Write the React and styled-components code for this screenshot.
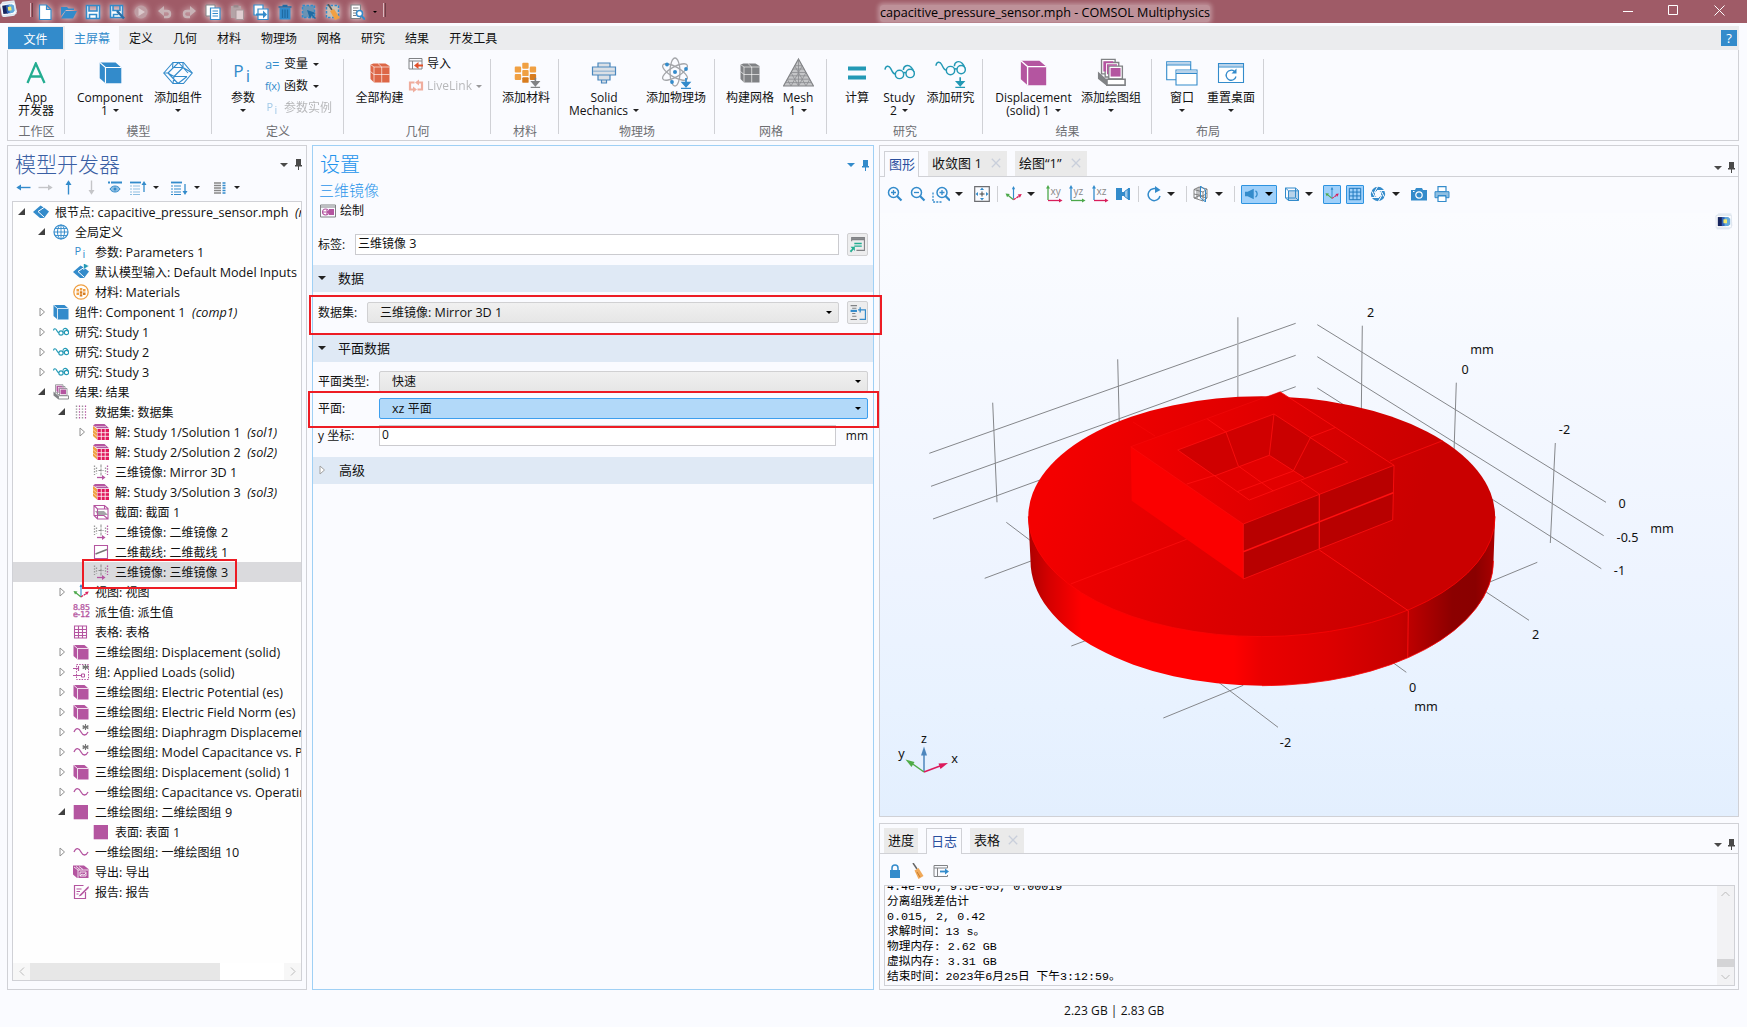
import React from "react";
import styled, { createGlobalStyle } from "styled-components";

const BLUE = "#338bcb";
const PURPLE = "#b455a0";
const GREY = "#808285";
const TEAL = "#2399b5";
const LINE = "#d0d1d6";
const BG = "#fafbff";

const Global = createGlobalStyle`
  * { box-sizing: border-box; }
  html, body { margin: 0; padding: 0; }
  body {
    width: 1747px; height: 1027px; overflow: hidden; background: ${BG}; color: #111;
    font: 12px/14px "Open Sans", "Noto Sans CJK SC", sans-serif;
  }
  svg { display: block; flex: none; }
`;

/* Latin runs are set a little larger than the Chinese glyphs beside them. */
const Latin = styled.span`font-size: 12.6px;`;
const Mixed = ({ children }) =>
  children.split(/([\x20-\x7e]+)/).map((t, i) => (i % 2 ? <Latin key={i}>{t}</Latin> : t));

/* ---------- icons ---------- */

const Svg = ({ s = 16, w, h, vb = 16, children }) => (
  <svg width={w || s} height={h || s} viewBox={`0 0 ${vb} ${vb}`} fill="none" strokeLinejoin="miter">
    {children}
  </svg>
);

const Cube = ({ c, s = 16 }) => (
  <Svg s={s}>
    <path d="M.5 1h11L15.500 4.500v11H4.500L.5 12z" fill={c} />
    <path d="M.5 1 4.500 4.500h11M4.500 4.500v11" stroke="#fff" strokeWidth=".8" />
  </Svg>
);

const GridCube = ({ c, s = 20 }) => (
  <Svg s={s} vb={20}>
    <path d="M.5 1.500 3.500.5h12l4 2.500v16.500H4L.5 16z" fill={c} />
    <path d="M.5 1.500 4 4h15.500M4 4v15.500M11.700 4v15.500M4 11.500h15.500M.5 8.500l3.500 3M8 .5 11.700 4" stroke="#fff" strokeWidth=".8" opacity=".8" />
  </Svg>
);

const Glasses = ({ s = 16, up = 0, children }) => (
  <Svg s={s} vb={32}>
    <g stroke={TEAL} strokeWidth={s > 20 ? 1.5 : 2.3} transform={`translate(0 ${-up})`}>
      <path d="M1 13c.5-4 4-5 6-1s2.500 5.500 5 5.500" />
      <circle cx="16" cy="18" r="4.300" />
      <circle cx="27" cy="17" r="4.300" />
      <path d="M20 17c.8-1.200 1.800-1.200 2.800-.5M20 13.500c0-5 5-6 8-3 1.500 1.500 2.500 3 2.800 5" />
    </g>
    {children}
  </Svg>
);

const DownArrow = ({ c }) => <path d="M26 21v6M22.500 25.500h7L26 29.500zM21 31.500h10" stroke={c} strokeWidth="1.700" fill={c} />;

const Wave = ({ star }) => (
  <Svg>
    <path d="M1 8c2-5 5-4 7 0s5 4 7 0" stroke={PURPLE} strokeWidth="1.300" />
    {star && <path d="M12.500 0v6M9.700 1.500l5.600 3.200M15.300 1.500 9.700 4.700M9.500 3h6" stroke="#777" strokeWidth="1.100" />}
  </Svg>
);

const Mirror = () => (
  <Svg>
    <path d="M1.500 1.500v9.500M3.500 3.500v6M12.500 3.500v6" stroke="#999" strokeWidth="1.300" strokeDasharray="1.500 1.300" />
    <path d="M14.500 1.500v9.500" stroke={PURPLE} strokeDasharray="1.500 1.300" strokeWidth="1.300" />
    <path d="M8 .5v11M5.500 6.500h5" stroke="#888" strokeWidth="1" strokeDasharray="3 1" />
    <path d="M4 13.500h6" stroke={PURPLE} strokeWidth="1.300" />
    <path d="M9 11l3.500 2.500L9 16z" fill={PURPLE} />
  </Svg>
);

const Solution = () => (
  <Svg>
    <path d="M0 2 4 5v10.500L0 12z" fill="#f0a043" />
    <path d="M0 1.500 2 0h9.500L16 4.300H4.500z" fill={PURPLE} />
    <path d="M4.500 5H16v11H4.500z" fill="#e0185c" />
    <path d="M8.300 5v11M12.200 5v11M4.500 8.700H16M4.500 12.300H16" stroke="#fff" strokeWidth=".8" />
    <path d="M0 5.500 4 9M0 9l4 3.500M2.500 2.500 13 2.500" stroke="#fff" strokeWidth=".5" />
  </Svg>
);

const Triad = ({ s = 16 }) => (
  <Svg s={s}>
    <path d="M8 1v11" stroke={BLUE} strokeWidth="1.100" />
    <path d="M8 0 6.500 3h3z" fill={BLUE} />
    <path d="M8 13 2.500 8.500" stroke="#4ca84a" strokeWidth="1.200" />
    <path d="M.5 7 4.500 7.500 2 10.500z" fill="#4ca84a" />
    <path d="M8 13l6-4" stroke="#d91e5b" strokeWidth="1.200" strokeDasharray="2.500 .8" />
    <path d="M15.800 7.500 12 8l2 3z" fill="#d91e5b" />
  </Svg>
);

const Stack = ({ s = 16 }) => (
  <Svg s={s} vb={32}>
    <g strokeWidth="1.500" stroke={GREY} fill="#fff">
      <path d="M5 1.500h15v16H5z" />
      <path d="M9 5h15v16H9z" />
      <path d="M13 9h15v14H13z" />
    </g>
    <path d="M7 3.500h11v2h-8V15H7z M11 7h11v1.500H12.500V18H11z" fill={PURPLE} />
    <path d="M15 11h11v9.500H15z" fill={PURPLE} />
    <path d="M1 15l10 9v7L1 23z" fill={GREY} />
    <path d="M11 23.500h20V30H11z" fill="#fff" stroke={GREY} strokeWidth="1.800" />
  </Svg>
);

const Diamond = ({ flag }) => (
  <Svg>
    <path d="M0 8 7.500 1.500l4 2.500L16 7.500 11 14H7z" fill={BLUE} />
    <path d="M5 7.500 11 3.500M5 7.500l6 5.500" stroke="#fff" strokeWidth="1" />
    {flag && <path d="M10.500-1 16 2l-5.500 3.500z" fill={TEAL} stroke="#fff" strokeWidth=".6" />}
  </Svg>
);

const PiText = ({ s = 16, c = BLUE }) => (
  <Svg s={s}>
    <text x="1.500" y="11" fontSize="11" fill={c} fontFamily="Open Sans">P</text>
    <text x="9.500" y="14" fontSize="11" fill={c} fontFamily="Open Sans">i</text>
  </Svg>
);

const Globe = () => (
  <Svg>
    <circle cx="8" cy="8" r="7" stroke={BLUE} strokeWidth="1.200" />
    <ellipse cx="8" cy="8" rx="3.500" ry="7" stroke={BLUE} />
    <path d="M8 1v14M1 8h14M2 4.500h12M2 11.500h12" stroke={BLUE} strokeWidth=".9" />
  </Svg>
);

const Materials = () => (
  <Svg>
    <circle cx="8" cy="8" r="7.200" stroke="#f0a043" strokeWidth="1.300" />
    <path d="M3.500 5h2.500v2.500H3.500zM6.800 4h2.500v2.500H6.800zM10 5h2.500v2.500H10zM3.500 8.400h2.500v2.500H3.500z" fill="#f0a043" />
    <path d="M6.800 7.300h2.500v2.400H6.800zM10 8.400h2.500v2.500H10zM6.800 10.300h2.500v2.300H6.800z" fill="#d87c1e" />
  </Svg>
);

const DatasetDots = () => (
  <Svg>
    <path d="M3.500 1.500v13M9.500 1.500v13" stroke="#999" strokeWidth="1.400" strokeDasharray="1.400 1.500" />
    <path d="M6.500 1.500v13M12.500 1.500v13" stroke={PURPLE} strokeWidth="1.200" strokeDasharray="1.400 1.500" />
  </Svg>
);

const CutPlane = () => (
  <Svg>
    <path d="M2 7h9l4 4H5z" fill="#a5a5a8" />
    <path d="M1 1.500h10.500L15 4.500V15H4.500L1 11.500zM1 1.500l3.500 3.500H15M4.500 5v10M11.500 1.500v3M1 11.500h10l4 3.500" stroke={PURPLE} strokeWidth="1.100" />
  </Svg>
);

const CutLine = () => (
  <Svg>
    <path d="M1.500 1.500h13v13h-13z" stroke={PURPLE} strokeWidth="1.100" fill="#fff" />
    <path d="M2.500 10 14 5.500" stroke="#777" strokeWidth="1.400" />
  </Svg>
);

const Derived = () => (
  <Svg s={17}>
    <g fontSize="7.500" fill={PURPLE} stroke={PURPLE} strokeWidth=".3" fontFamily="DejaVu Sans">
      <text x="0" y="6.500" textLength="16">8.85</text>
      <text x="0" y="13.500" textLength="16">e-12</text>
    </g>
  </Svg>
);

const TableGrid = () => (
  <Svg>
    <path d="M1.500 2h12v12h-12zM1.500 5.500h12M1.500 8.500h12M1.500 11.500h12M5.500 2v12M9.500 2v12" stroke={PURPLE} strokeWidth="1.100" />
  </Svg>
);

const GroupIcon = () => (
  <Svg>
    <path d="M3.500.5h12v15h-12z" stroke={PURPLE} strokeDasharray="1.500 1.200" />
    <path d="M0 4.500h5M0 11.500h8M5.500 2v5" stroke={PURPLE} strokeWidth="1.200" />
    <path d="M8.500 10h3v3h-3z" stroke={PURPLE} />
    <path d="M12.500 0v6M9.700 1.500l5.600 3.200M15.300 1.500 9.700 4.700M9.500 3h6" stroke="#777" strokeWidth="1.100" />
  </Svg>
);

const SolidSquare = () => (
  <Svg>
    <path d="M.7 1h14.300v14.300H.7z" fill={PURPLE} />
  </Svg>
);

const ExportIcon = () => (
  <Svg>
    <path d="M0 1.500h11L15.500 5v9H4L0 10.500z" fill={PURPLE} />
    <path d="M1 3l4 3h10M5 6v8M7 8h6v4H7zM7 12l2-2 2 1 2-2M3 2.500l4 3M6 2.500l4 3" stroke="#fff" strokeWidth=".8" />
  </Svg>
);

const ReportIcon = () => (
  <Svg>
    <path d="M12.500 8v6.500h-11v-13h9" stroke={PURPLE} strokeWidth="1.200" />
    <path d="M3.500 5h5M3.500 7.500h3.500M3.500 10h2" stroke={PURPLE} />
    <path d="M15.500 2 7 10.500l-1.500 2 2.500-.8L15.800 4z" fill={PURPLE} />
  </Svg>
);

const MonitorLogo = ({ s = 16, t = 0 }) => (
  <Svg s={s}>
    <g transform={`rotate(${t} 8 8)`}>
      <path d="M3 1h11.500l1 11-3 3.500H1.500L.5 4z" fill="#e4ebf3" />
      <path d="M1 3h13.500v11H1z" fill="#fdfdfe" stroke="#cfd9e4" strokeWidth=".5" />
      <path d="M2.500 4.500H7v8H2.500z" fill="#17255e" />
      <path d="M6 4.500h4v8H6z" fill="#2f62b8" />
      <path d="M8.500 4.500h3.200L13.500 6v5l-1.800 1.500H8.500z" fill="#61a8dc" />
      <path d="M7.500 6.500h3.200v3.500H7.500z" fill="#f3ea6c" />
    </g>
  </Svg>
);

/* ---------- shared parts ---------- */

const Caret = styled.i`
  flex: none; width: 0; height: 0; display: inline-block;
  margin-left: ${(p) => p.$ml || 0}px;
  border: ${(p) => p.$s || 4.5}px solid transparent;
  border-bottom-width: 0;
  border-top: ${(p) => (p.$s || 4.5) + 0.3}px solid ${(p) => p.$c || "#222"};
`;

const Pin = ({ c = "#4a4a4a" }) => (
  <svg width="7" height="11" viewBox="0 0 7 11">
    <path d="M1 0h5v6h1v1.500H4V11H3V7.500H0V6h1z" fill={c} />
  </svg>
);

const Marker = styled.div`
  position: absolute; z-index: 5; pointer-events: none;
  border: 2px solid #ed1c24;
  left: ${(p) => p.$x}px; top: ${(p) => p.$y}px;
  width: ${(p) => p.$w}px; height: ${(p) => p.$h}px;
`;

/* ---------- title bar ---------- */

const TitleBar = styled.header`
  height: 23px; background: #9f5b67; display: flex; align-items: center; overflow: hidden;
`;
const TitleLogo = styled.div`width: 30px; height: 23px;`;
const Grip = styled.i`width: 3px; height: 14px; margin-top: -3px; border-left: 1px solid #d9b8be; border-right: 1px solid #6e3f47;`;
const QuickSlot = styled.span`
  width: 24px; height: 22px; display: flex; align-items: center; justify-content: center;
  opacity: ${(p) => (p.$off ? 0.75 : 1)};
  filter: drop-shadow(0 0 3px rgba(255, 255, 255, 0.85));
`;
const QuickBar = styled.div`width: 390px; display: flex; align-items: center; margin-right: 490px;`;
const WindowTitle = styled.div`
  width: 330px; text-align: center; white-space: nowrap; line-height: 16px; height: 17px; margin-top: 4px; color: #000;
  border-radius: 3px; background: rgba(255, 255, 255, 0.33);
  box-shadow: 0 0 4px 2px rgba(255, 255, 255, 0.33);
`;
const WindowButtons = styled.div`margin-left: auto; display: flex; gap: 35px; margin-right: 22px; padding-bottom: 3px;`;

const quick = [
  [<path key="a" d="M2.500 1h7L14 5.500V15.500H2.500zM9.500 1v4.500H14" fill="#fff" stroke={BLUE} strokeWidth="1.200" />],
  [<path key="a" d="M0 3h6l1.500 1.500H13V6H5L0 12zM0 14.500 4.500 7H16L12 14.500z" fill={BLUE} />],
  [<path key="a" d="M1.500 1.500h13v13h-13zM4 1.500v5.500h8V1.500M4.500 14.500v-4h7v4" fill="#fff" stroke={BLUE} strokeWidth="1.600" />],
  [<path key="a" d="M1.500 1.500h12v12h-12zM4 1.500v5h7V1.500M4.500 13.500v-3h5" fill="#fff" stroke={BLUE} strokeWidth="1.600" />, <path key="b" d="M8 7l7 7.500" stroke="#2a6ea5" strokeWidth="2.500" />],
  [<circle key="a" cx="8" cy="8" r="6.500" fill="#c9b3b7" />, <path key="b" d="M5.500 4 12 8l-6.500 4z" fill="#eee" />],
  [<path key="a" d="M3 7h7c4 0 4 6 0 6H7" stroke="#d6d0d1" strokeWidth="2.400" />, <path key="b" d="M1 7l6-5v10z" fill="#d6d0d1" />],
  [<path key="a" d="M13 7H6c-4 0-4 6 0 6h3" stroke="#d6d0d1" strokeWidth="2.400" />, <path key="b" d="M15 7 9 2v10z" fill="#d6d0d1" />],
  [<path key="a" d="M1 1h9v11H1z" fill="#fff" stroke={GREY} />, <path key="b" d="M5.500 4h9.500v11.500H5.500zM7.500 7h5.500M7.500 9.500h5.500M7.500 12h5.500" fill="#fff" stroke={BLUE} strokeWidth="1.200" />],
  [<path key="a" d="M2 2h10v12H2z" fill="#bbb" />, <path key="b" d="M4.500 1h5v2.500h-5z" fill="#999" />, <path key="c" d="M7 6h7.500v9.500H7z" fill="#f5f5f5" stroke="#aaa" />],
  [<path key="a" d="M1 1h9v10H1z" fill="#fff" stroke={BLUE} strokeWidth="1.200" />, <path key="b" d="M5 5h10v10.500H5z" fill="#fff" stroke={BLUE} strokeWidth="1.200" />, <path key="c" d="M3 9.500h7v-3l4 4-4 4v-3H3z" fill={BLUE} />],
  [<path key="a" d="M2.500 4h11v11.500h-11z" fill={BLUE} />, <path key="b" d="M1.500 3h13M5.500 1.500h5M5.500 5.500v8.500M8 5.500v8.500M10.500 5.500v8.500" stroke="#1f6ba3" strokeWidth="1.300" />],
  [<path key="a" d="M1.500 1.500h12v12h-12z" fill="#6b93b4" stroke={BLUE} strokeWidth="1.500" strokeDasharray="2.500 1.500" />, <path key="b" d="M6 6l3 9 1.500-3.500L14 15l1-1-3.500-3.500L15 9z" fill="#1f6ba3" />],
  [<path key="a" d="M1.500 1.500h12v12h-12z" fill="#c9bfb4" stroke={BLUE} strokeWidth="1.500" strokeDasharray="2.500 1.500" />, <path key="b" d="M3 0l4 6" stroke="#555" strokeWidth="1.600" />, <path key="c" d="M5 7l4-2 6 9-5 2z" fill="#f0a043" />],
  [<path key="a" d="M2 1h9.500v13.500H2zM4 4h5.500M4 6.500h4M4 9h3M4 11.500h3" fill="#fff" stroke={GREY} strokeWidth="1.200" />, <circle key="b" cx="10.500" cy="9.500" r="3" fill="#fff" stroke={BLUE} strokeWidth="1.500" />, <path key="c" d="M12.500 12 16 15.500" stroke={BLUE} strokeWidth="2" />],
];

/* ---------- ribbon ---------- */

const TabStrip = styled.nav`
  margin: 3px 8px 0; height: 24px; background: #ebecee; display: flex; align-items: center; padding-right: 2px;
`;
const FileTab = styled.div`
  width: 55px; height: 22px; margin-right: 2px; background: ${BLUE}; color: #fff;
  display: flex; align-items: center; justify-content: center; padding-top: 3px;
`;
const RibbonTab = styled.div`
  height: 24px; padding: 1px ${(p) => (p.$on ? 9 : 10)}px 0; line-height: 24px; color: ${(p) => (p.$on ? BLUE : "#111")};
  background: ${(p) => (p.$on ? BG : "transparent")};
`;
const Help = styled.div`
  margin-left: auto; width: 16px; height: 16px; background: ${BLUE}; color: #fff; text-align: center; line-height: 16px; font-size: 13px;
`;
const Ribbon = styled.section`
  margin: 0 8px 0 7px; height: 91px; border: 1px solid ${LINE}; border-top: 0; display: flex; padding-top: 7px;
`;
const Group = styled.div`
  width: ${(p) => p.$w}px; height: 83px; position: relative; display: flex; flex-direction: column;
  &::after { content: ""; position: absolute; right: 0; top: 2px; height: 75px; border-right: 1px solid ${LINE}; }
`;
const GroupBody = styled.div`height: 67px; display: flex; padding-left: ${(p) => p.$pl || 0}px;`;
const GroupLabel = styled.div`text-align: center; color: #6d6e72; line-height: 16px;`;
const BigButton = styled.div`
  width: ${(p) => p.$w}px; flex: none; display: flex; flex-direction: column; align-items: center; white-space: nowrap;
`;
const BigIcon = styled.div`height: 34px; padding-bottom: 3px; display: flex; align-items: center; justify-content: center;`;
const BigLine = styled.div`height: 13px; line-height: 13px; display: flex; align-items: center; gap: 5px;`;
const SmallColumn = styled.div`display: flex; flex-direction: column;`;
const SmallButton = styled.div`
  height: 22px; margin-top: ${(p) => p.$mt || 0}px; display: flex; align-items: center; gap: 3px; opacity: ${(p) => (p.$off ? 0.45 : 1)};
  color: ${(p) => (p.$off ? "#666" : "#111")}; white-space: nowrap;
`;
const Sym = styled.span`color: ${BLUE}; width: 16px; font-size: ${(p) => p.$s || 13}px; line-height: 14px; letter-spacing: -0.3px;`;

const Big = ({ w, icon, a, b, caret }) => (
  <BigButton $w={w}>
    <BigIcon>{icon}</BigIcon>
    <BigLine>{a}</BigLine>
    <BigLine>
      {b && <span>{b}</span>}
      {caret && <Caret $s={3} />}
    </BigLine>
  </BigButton>
);

const AddComponent = () => (
  <Svg s={30} vb={30}>
    <g stroke={BLUE} strokeWidth="1.100">
      <path d="M.8 15 10 4.500h10.500L29.200 15l-8.700 10.500H10z" />
      <path d="M5 15 15.500 4.500 25 15M.8 15H5l6 3.500h13M5 15l10 10.500M11 18.500 20 9.500 29.200 15M11 18.500 10 25.500M20 9.500V4.500M20 9.500H9.500M24 18.500 15 25.500M9.500 9.500 10 4.500" />
    </g>
  </Svg>
);
const AddMaterial = () => (
  <Svg s={30} vb={32}>
    <g fill="#f0a043">
      <rect x="4" y="9" width="6.800" height="6.500" rx="1" /><rect x="12" y="5" width="6.800" height="6.500" rx="1" />
      <rect x="20" y="9" width="6.800" height="6.500" rx="1" /><rect x="4" y="17" width="6.800" height="6.500" rx="1" />
      <rect x="12" y="12.800" width="6.800" height="6.500" rx="1" />
    </g>
    <rect x="12" y="20.500" width="6.800" height="6" rx="1" fill="#d87c1e" />
    <rect x="20" y="17" width="6.800" height="6.500" rx="1" fill="#d87c1e" />
    <DownArrow c={GREY} />
  </Svg>
);
const SolidMech = () => (
  <Svg s={30} vb={30}>
    <g fill="#dbe0e6" stroke="#4a87bd" strokeWidth="1.200">
      <path d="M9 5h12v4H9zM3.500 9h23v8h-23zM9 17h12v5H9zM12.500 22h5v3h-5z" />
    </g>
    <path d="M4 12.500h22v1.500H4z" fill="#9fbcd6" />
  </Svg>
);
const Atom = () => (
  <Svg s={32} vb={32}>
    <g stroke="#a4a6aa" strokeWidth="1.300">
      <ellipse cx="15" cy="15" rx="5" ry="14" />
      <ellipse cx="15" cy="15" rx="5" ry="14" transform="rotate(60 15 15)" />
      <ellipse cx="15" cy="15" rx="5" ry="14" transform="rotate(-60 15 15)" />
    </g>
    <g fill={BLUE}>
      <circle cx="15" cy="15" r="2" /><circle cx="7" cy="7.500" r="1.900" /><circle cx="26" cy="12" r="1.900" /><circle cx="12" cy="25" r="1.900" />
    </g>
    <DownArrow c={BLUE} />
  </Svg>
);
const MeshTri = () => (
  <Svg s={31} vb={31}>
    <path d="M15.500 2 30.500 29H.5z" fill="#c4c5c7" stroke={GREY} strokeWidth="1.200" />
    <path transform="translate(0 1)" d="M11.700 7.700h7.600M8 14.500h15M4.200 21.200h22.600M11.700 7.700 23 28M8 14.500 15.500 28M4.200 21.200 8 28M19.300 7.700 8 28M23 14.500 15.500 28M26.800 21.200 23 28M9.800 11h11.400M6 17.800h19M2.500 24.600h26M15.500 1V28" stroke="#8a8c8f" strokeWidth=".8" />
  </Svg>
);
const Windows = () => (
  <Svg s={32} vb={32}>
    <path d="M.7 4.700h24v18h-24z" fill="#fff" stroke={BLUE} strokeWidth="1.100" />
    <path d="M1.200 5.200h23v2.500h-23z" fill="#b9d3ea" /><path d="M.7 8h24" stroke={BLUE} />
    <path d="M10 13h21v15H10z" fill="#fff" stroke={BLUE} strokeWidth="1.100" />
    <path d="M10.500 13.500h20v2.500h-20z" fill="#b9d3ea" /><path d="M10 16.500h21" stroke={BLUE} />
  </Svg>
);
const ResetDesk = () => (
  <Svg s={28} vb={28}>
    <path d="M1.500 4.500h25v19h-25z" fill="#fff" stroke={BLUE} strokeWidth="1.100" />
    <path d="M2 5h24v2.500H2z" fill="#b9d3ea" /><path d="M1.500 8h25" stroke={BLUE} />
    <path d="M17.500 12.500a5 5 0 1 0 1.500 5" stroke={BLUE} strokeWidth="1.300" />
    <path d="M19.500 9.500v5h-5z" fill={BLUE} />
  </Svg>
);

/* ---------- tree panel ---------- */

const Workspace = styled.main`display: flex; margin: 4px 8px 0 7px; height: 845px;`;
const ModelPanel = styled.section`
  width: 300px; height: 845px; border: 1px solid ${LINE}; padding: 0 4px 8px; display: flex; flex-direction: column; position: relative;
`;
const PanelHead = styled.div`display: flex; align-items: center; height: 32px; padding: 3px 0 0 3px;`;
const PanelTitle = styled.h2`
  margin: 0; font-size: ${(p) => p.$s}px; line-height: 28px; font-weight: 300; color: ${(p) => p.$c};
  font-family: "Noto Sans CJK SC Light", "Noto Sans CJK SC", sans-serif;
`;
const HeadTools = styled.div`margin-left: auto; display: flex; gap: 7px; align-items: center; margin-right: ${(p) => p.$mr}px; padding-top: ${(p) => p.$pt}px;`;
const TreeTools = styled.div`
  height: 23px; display: flex; align-items: center; padding: 0 0 3px 4px;
`;
const TreeBox = styled.div`
  border: 1px solid ${LINE}; background: #fefefe; height: 781px; overflow: hidden; display: flex; flex-direction: column;
`;
const Row = styled.div`
  height: 20px; flex: none; display: flex; align-items: center; white-space: pre; overflow: hidden;
  padding-left: ${(p) => 5 + p.$d * 20}px; background: ${(p) => (p.$sel ? "#dadadd" : "transparent")};
`;
const RowText = styled.span`padding-top: 2px;`;
const Twist = styled.span`width: 15px; flex: none; display: flex;`;
const RowIcon = styled.span`width: 22px; flex: none; display: flex;`;
const HScroll = styled.div`
  height: 17px; margin-top: auto; display: flex; background: #fff; flex: none;
  b { width: 17px; background: #f7f7f7; color: #c4c4c4; display: flex; align-items: center; justify-content: center; }
  i { width: 190px; background: #e7e7e7; margin-right: auto; }
`;

const TwistIcon = ({ state }) =>
  state === "open" ? (
    <svg width="8" height="8" viewBox="0 0 8 8"><path d="M7 0v7H0z" fill="#404040" /></svg>
  ) : state === "closed" ? (
    <svg width="8" height="10" viewBox="0 0 8 10"><path d="M2 1 6.500 5 2 9z" fill="#fff" stroke="#909090" /></svg>
  ) : null;

const V3 = <Cube c={PURPLE} />;
const tree = [
  [0, "open", <Diamond />, "根节点: capacitive_pressure_sensor.mph", "(root)"],
  [1, "open", <Globe />, "全局定义"],
  [2, "", <PiText />, "参数: Parameters 1"],
  [2, "", <Diamond flag />, "默认模型输入: Default Model Inputs"],
  [2, "", <Materials />, "材料: Materials"],
  [1, "closed", <Cube c={BLUE} />, "组件: Component 1", "(comp1)"],
  [1, "closed", <Glasses />, "研究: Study 1"],
  [1, "closed", <Glasses />, "研究: Study 2"],
  [1, "closed", <Glasses />, "研究: Study 3"],
  [1, "open", <Stack />, "结果: 结果"],
  [2, "open", <DatasetDots />, "数据集: 数据集"],
  [3, "closed", <Solution />, "解: Study 1/Solution 1", "(sol1)"],
  [3, "", <Solution />, "解: Study 2/Solution 2", "(sol2)"],
  [3, "", <Mirror />, "三维镜像: Mirror 3D 1"],
  [3, "", <Solution />, "解: Study 3/Solution 3", "(sol3)"],
  [3, "", <CutPlane />, "截面: 截面 1"],
  [3, "", <Mirror />, "二维镜像: 二维镜像 2"],
  [3, "", <CutLine />, "二维截线: 二维截线 1"],
  [3, "", <Mirror />, "三维镜像: 三维镜像 3", "", true],
  [2, "closed", <Triad />, "视图: 视图"],
  [2, "", <Derived />, "派生值: 派生值"],
  [2, "", <TableGrid />, "表格: 表格"],
  [2, "closed", V3, "三维绘图组: Displacement (solid)"],
  [2, "closed", <GroupIcon />, "组: Applied Loads (solid)"],
  [2, "closed", V3, "三维绘图组: Electric Potential (es)"],
  [2, "closed", V3, "三维绘图组: Electric Field Norm (es)"],
  [2, "closed", <Wave star />, "一维绘图组: Diaphragm Displacement"],
  [2, "closed", <Wave star />, "一维绘图组: Model Capacitance vs. Pressure"],
  [2, "closed", V3, "三维绘图组: Displacement (solid) 1"],
  [2, "closed", <Wave />, "一维绘图组: Capacitance vs. Operating"],
  [2, "open", <SolidSquare />, "二维绘图组: 二维绘图组 9"],
  [3, "", <SolidSquare />, "表面: 表面 1"],
  [2, "closed", <Wave />, "一维绘图组: 一维绘图组 10"],
  [2, "", <ExportIcon />, "导出: 导出"],
  [2, "", <ReportIcon />, "报告: 报告"],
];

const ArrowIcon = ({ r = 0, c = BLUE }) => (
  <svg width="15" height="15" viewBox="0 0 15 15">
    <g transform={`rotate(${r} 7.5 7.5)`}>
      <path d="M2 7.500h12.500" stroke={c} strokeWidth="1.400" />
      <path d="M.3 7.500 5 4.500v6z" fill={c} />
    </g>
  </svg>
);
const ListIcon = ({ up }) => (
  <svg width="17" height="14" viewBox="0 0 17 14" fill="none">
    <path d="M0 1.500h11" stroke={BLUE} strokeWidth="1.800" />
    <path d="M0 5h2M0 8h2M0 11h2M0 13.500h2M3 5h7M3 8h7M3 11h7M3 13.500h7" stroke={up ? "#8fbfe2" : BLUE} strokeWidth="1.100" />
    {up ? <path d="M14 2v9" stroke={BLUE} strokeWidth="1.300" /> : <path d="M14 3v9" stroke={BLUE} strokeWidth="1.300" />}
    <path d={up ? "M14 0l2.500 4h-5z" : "M14 14l2.500-4h-5z"} fill={BLUE} />
  </svg>
);

/* ---------- settings panel ---------- */

const SettingsPanel = styled.section`
  width: 562px; height: 845px; margin-left: 5px; border: 1px solid #9fd0f5; position: relative;
`;
const SettingsHead = styled(PanelHead)`padding-left: 7px;`;
const SubTitle = styled.div`padding: 2px 0 0 6px; font-size: 15px; line-height: 20px; color: #2a95ea; font-weight: 300; height: 24px;`;
const PlotLine = styled.div`display: flex; align-items: center; gap: 4px; padding-left: 7px; height: 18px;`;
const Field = styled.div`
  display: flex; align-items: center; height: ${(p) => p.$h || 27}px; margin-top: ${(p) => p.$mt || 0}px; padding: 0 5px 0 5px;
`;
const Label = styled.label`width: ${(p) => p.$w}px; flex: none; padding-top: 1px;`;
const TextBox = styled.div`
  width: ${(p) => p.$w}px; height: 21px; background: #fff; border: 1px solid #cbcbcf; padding: 0 2px; line-height: 18px;
`;
const Select = styled.div`
  flex: 1; height: 21px; border: 1px solid ${(p) => (p.$on ? "#3d9fee" : "#d0d0d2")}; border-radius: 2px;
  background: ${(p) => (p.$on ? "#b2d9f9" : "linear-gradient(#f0f0f0, #e6e6e6)")};
  display: flex; align-items: center; justify-content: space-between; padding: 0 6px 0 12px;
`;
const SideButton = styled.div`
  width: 21px; height: 23px; margin-left: 8px; border: 1px solid #d0d0d2; border-radius: 2px; background: #ededee;
  display: flex; align-items: center; justify-content: center; flex: none;
`;
const Section = styled.div`
  height: 27px; margin-top: ${(p) => p.$mt || 0}px; background: #dfe9f5; display: flex; align-items: center; font-size: 13px;
  padding: 0 0 2px 5px; gap: ${(p) => p.$g || 12}px;
`;
const Unit = styled.span`margin-left: 10px;`;

/* ---------- right column ---------- */

const RightColumn = styled.div`margin-left: 5px; width: 860px; display: flex; flex-direction: column; gap: 6px;`;
const GraphicsPanel = styled.section`height: 672px; border: 1px solid ${LINE}; display: flex; flex-direction: column; position: relative;`;
const Tabs = styled.div`height: 31px; flex: none; display: flex; align-items: flex-end; padding-left: 4px; border-bottom: 1px solid ${LINE};`;
const Tab = styled.div`
  height: 25px; width: ${(p) => p.$w}px; margin-left: ${(p) => p.$ml || 0}px; padding: 0 0 1px ${(p) => (p.$on ? 4 : 4)}px;
  display: flex; align-items: center; font-size: 13px; white-space: pre;
  background: ${(p) => (p.$on ? BG : "#eaeaea")}; color: ${(p) => (p.$on ? "#2a4f9e" : "#111")};
  ${(p) => p.$on && `border: 1px solid ${LINE}; border-bottom: 0; margin-bottom: -1px; height: 26px;`}
  svg { margin: 0 6px 0 auto; }
`;
const TabTools = styled.div`margin-left: auto; display: flex; align-items: center; gap: 6px; padding: 0 3px 3px 0;`;
const CloseX = () => (
  <svg width="10" height="10" viewBox="0 0 10 10"><path d="M.8.8l8.400 8.400M9.200.8.8 9.200" stroke="#c9cfdb" strokeWidth="1.300" /></svg>
);
const GfxTools = styled.div`height: 36px; flex: none; display: flex; align-items: center; padding: 0 0 2px 1px;`;
const Tool = styled.span`margin-left: ${(p) => p.$m}px; width: ${(p) => p.$w || 18}px; display: flex; flex: none; justify-content: center;`;
const Sep = styled.i`margin-left: ${(p) => p.$m}px; width: 1px; height: 16px; background: #cfd0d4; flex: none;`;
const Toggle = styled(Tool)`
  height: 19px; align-items: center; justify-content: space-around; border: 1px solid #2e93e0; border-radius: 1px; background: #9fd0fa;
`;
const Canvas = styled.div`
  flex: 1; background: linear-gradient(#fbfcff 0%, #f6f9ff 22%, #eef4ff 60%, #e8f2ff 82%, #e3effe 100%);
`;
const CornerLogo = styled.div`position: absolute; right: 5px; top: 66px;`;

const LogPanel = styled.section`height: 167px; border: 1px solid ${LINE}; display: flex; flex-direction: column;`;
const LogTabs = styled(Tabs)`height: 30px;`;
const LogTools = styled.div`height: 31px; display: flex; align-items: center; gap: 7px; padding: 3px 0 0 7px;`;
const LogBox = styled.div`
  margin: 0 3px 0 4px; height: 101px; border: 1px solid ${LINE}; display: flex; overflow: hidden; justify-content: space-between;
`;
const LogText = styled.pre`
  margin: -6px 0 0 2px; font: 11.7px/15px "Liberation Mono", "Noto Sans CJK SC", monospace; color: #000;
`;
const VScroll = styled.div`
  width: 17px; background: #f2f2f4; display: flex; flex-direction: column; align-items: center; justify-content: space-between; padding: 5px 0; color: #c0c0c0;
  i { width: 17px; height: 8px; background: #d4d4d6; margin: auto 0 7px; }
`;
const Status = styled.footer`margin-top: 13px; padding-left: 1064px; line-height: 16px; letter-spacing: 0.05px;`;

const AxisTool = ({ t, v, h }) => (
  <Svg s={18} vb={18}>
    <path d="M3 2v13" stroke={v} strokeWidth="1.300" /><path d="M3 0 1 3.500h4z" fill={v} />
    <path d="M3 15.500h12" stroke={h} strokeWidth="1.300" /><path d="M17.500 15.500 14 13.500v4z" fill={h} />
    <text x="5.500" y="9.500" fontSize="10" fill="#888" fontFamily="Open Sans">{t}</text>
  </Svg>
);
const Magnify = ({ plus, box }) => (
  <Svg s={18} vb={18}>
    {box && <path d="M1 7.500V17h9" stroke={BLUE} strokeWidth="1.300" strokeDasharray="2 1.200" />}
    <g transform={box ? "translate(2.500 0)" : ""}>
      <circle cx="7.500" cy="7.500" r="5" stroke={BLUE} strokeWidth="1.500" />
      <path d={plus ? "M5 7.500h5M7.500 5v5" : "M5 7.500h5"} stroke={BLUE} strokeWidth="1.300" />
      <path d="M11 11l4.500 4.500" stroke={BLUE} strokeWidth="2.200" />
    </g>
  </Svg>
);

const R = "#ff1010";
const axisText = [
  ["2", 1370.5, 317], ["mm", 1482, 354], ["0", 1465, 374], ["-2", 1564.5, 434], ["0", 1622, 508], ["-0.5", 1627.5, 542],
  ["mm", 1662, 533], ["-1", 1619.5, 575], ["2", 1535.7, 639], ["0", 1412.7, 692], ["mm", 1426, 711], ["-2", 1285.5, 747],
  ["z", 924, 743], ["y", 901.5, 758], ["x", 954.5, 763],
];

const Scene = () => (
  <svg width="858" height="603" viewBox="880 213 858 603" fill="none">
    <defs>
      <linearGradient id="side" gradientUnits="userSpaceOnUse" x1="1030" x2="1494" y1="0" y2="0">
        <stop offset="0" stopColor="#b00000" /><stop offset=".04" stopColor="#d40000" /><stop offset=".11" stopColor="#ff0000" />
        <stop offset=".44" stopColor="#ff0000" /><stop offset=".5" stopColor="#ea0000" /><stop offset=".65" stopColor="#dc0000" />
        <stop offset=".8" stopColor="#c60000" /><stop offset=".91" stopColor="#8c0000" /><stop offset=".96" stopColor="#8a0000" />
        <stop offset="1" stopColor="#a80000" />
      </linearGradient>
      <linearGradient id="top" gradientUnits="userSpaceOnUse" x1="1060" y1="450" x2="1400" y2="560">
        <stop offset="0" stopColor="#f40000" /><stop offset=".5" stopColor="#de0000" /><stop offset="1" stopColor="#ca0000" />
      </linearGradient>
      <linearGradient id="blk" gradientUnits="userSpaceOnUse" x1="1150" y1="440" x2="1390" y2="470">
        <stop offset="0" stopColor="#f00000" /><stop offset="1" stopColor="#ce0000" />
      </linearGradient>
    </defs>
    <g stroke="#85878b" strokeWidth="1">
      <path d="M992.700 402.700 997 502.300M1117.700 359.300 1119.300 425M929.300 453.300 1295.700 323.300M931 486.300 1295.700 355.300M933 519 1295.700 386.700" />
      <path d="M1006.300 522.300 1035 544M984.700 578.300 1035 559.500M1071.300 646 1090 639M1163.300 718 1243.300 685.300M1215 679.500 1278 727.300" />
      <path d="M1317.300 324.700 1606 502.300M1317.300 356.700 1603.700 535.700M1317.300 388 1601.300 568.700M1456.300 382.700 1454 452M1555.300 443 1550.300 543" />
      <path d="M1537.300 562.300 1485 584M1529 620.300 1480 588M1406.300 672.300 1390 660.500M1362.300 325.700 1361.300 412" />
    </g>
    <path d="M1237.800 317.300V400" stroke="#b4b6ba" strokeWidth="1.600" />
    <path d="M1028.300 516.500 1030.500 560.800A231.500 124.900 0 0 0 1493.500 560.800L1495.100 516.500z" fill="url(#side)" />
    <ellipse cx="1261.700" cy="516.500" rx="233.400" ry="120.200" fill="url(#top)" />
    <path d="M1028.300 516.500A233.400 120.200 0 0 0 1495.100 516.500M1493.500 560.800A231.500 124.900 0 0 1 1262 685.700" stroke="#fb0505" strokeWidth=".8" />
    <g stroke={R} strokeWidth=".9">
      <path d="M1319.300 550 1408.300 610.700 1407.700 657.700" />
      <path d="M1390 461 1442.700 440.700M1070.700 584 1186.700 539.300" opacity=".8" />
      <path d="M1133 422 1155 436" opacity=".4" />
    </g>
    <path d="M1130.700 446.700 1280 391.700 1394 465.300 1243.300 524z" fill="url(#blk)" />
    <path d="M1130.700 446.700 1243.300 524V579L1131.700 500.700z" fill="#fb0000" />
    <path d="M1243.300 524 1394 465.300 1392.700 520 1243.300 579z" fill="#b80000" />
    <path d="M1177.700 450 1274 414 1269.300 455.300 1215 475.700z" fill="#d00000" />
    <path d="M1274 414 1347.700 462 1304.300 477.700 1269.300 455.300z" fill="#ca0000" />
    <path d="M1215 475.700 1269.300 455.300 1304.300 477.700 1249.300 500z" fill="#e20000" />
    <g stroke={R} strokeWidth=".8">
      <path d="M1130.700 446.700 1280 391.700" opacity=".45" />
      <path d="M1130.700 446.700 1243.300 524" opacity=".6" />
      <path d="M1243.300 524 1394 465.300 1280 391.700M1243.300 524V579M1394 465.300 1392.700 520 1243.300 579" />
      <path d="M1243.300 551.700 1393.300 492.700" strokeWidth="1.500" />
      <path d="M1319.300 494V549.300" strokeWidth="1.200" />
      <path d="M1177.700 450 1274 414 1347.700 462 1249.300 500zM1274 414 1269.300 455.300M1226 432 1238.300 466M1310.700 437 1293.300 471" />
      <path d="M1215 475.700 1269.300 455.300 1304.300 477.700M1238.300 466 1273.300 491M1293.300 471 1237.300 491.700" />
      <path d="M1207.300 419 1226 432M1335 427.700 1310.700 437M1301 481.300 1319.300 494M1186.700 484 1215 475.300" />
    </g>
    <g strokeWidth="1.500">
      <path d="M924 772V754" stroke="#4d86bd" /><path d="M924 746.500 927 755.500h-6z" fill="#4d86bd" />
      <path d="M924 772 912 763.500" stroke="#4fac47" /><path d="M905.500 759.500 914.500 762 911.500 767z" fill="#4fac47" />
      <path d="M924 772 940 766" stroke="#dc1a5c" /><path d="M948 763 938.500 763.500 940.500 769z" fill="#dc1a5c" />
    </g>
    {axisText.map(([t, x, y], i) => (
      <text key={i} x={x} y={y} fontSize="12.600" textAnchor="middle" fill="#111" fontFamily="Noto Sans, sans-serif">{t}</text>
    ))}
  </svg>
);

export default function App() {
  return (
    <>
      <Global />
      <TitleBar>
        <QuickBar>
          <TitleLogo><MonitorLogo s={17} t={-8} /></TitleLogo>
          <Grip />
          {quick.map((q, i) => (
            <QuickSlot key={i} $off={(i > 3 && i < 7) || i === 8}><Svg s={16}>{q}</Svg></QuickSlot>
          ))}
          <Caret $s={2.5} $ml={4} $c="#000" />
          <Caret $s={3.5} $c="transparent" />
          <Grip />
        </QuickBar>
        <WindowTitle><Mixed>capacitive_pressure_sensor.mph - COMSOL Multiphysics</Mixed></WindowTitle>
        <WindowButtons>
          <svg width="10" height="11"><path d="M0 6.500h10" stroke="#fff" /></svg>
          <svg width="11" height="11"><path d="M.5.5h9v9h-9z" stroke="#fff" fill="none" /></svg>
          <svg width="11" height="11"><path d="M.5.5l10 10M10.500.5l-10 10" stroke="#fff" /></svg>
        </WindowButtons>
      </TitleBar>

      <TabStrip>
        <FileTab>文件</FileTab>
        {["主屏幕", "定义", "几何", "材料", "物理场", "网格", "研究", "结果", "开发工具"].map((t, i) => (
          <RibbonTab key={t} $on={i === 0}>{t}</RibbonTab>
        ))}
        <Help>?</Help>
      </TabStrip>

      <Ribbon>
        <Group $w={57}>
          <GroupBody $pl={2}>
            <Big w={52} a="App" b="开发器" icon={<Svg s={22} vb={22}><path d="M2.500 21 10.800 1.500 19.500 21M5.500 14.500h11" stroke="#23ad91" strokeWidth="2.300" /></Svg>} />
          </GroupBody>
          <GroupLabel>工作区</GroupLabel>
        </Group>
        <Group $w={147}>
          <GroupBody $pl={7}>
            <Big w={76} a="Component" b="1" caret icon={<Cube c={BLUE} s={23} />} />
            <Big w={60} a="添加组件" caret icon={<AddComponent />} />
          </GroupBody>
          <GroupLabel>模型</GroupLabel>
        </Group>
        <Group $w={132}>
          <GroupBody $pl={9}>
            <Big w={44} a="参数" caret icon={<PiText s={25} />} />
            <SmallColumn>
              <SmallButton $mt={-4}><Sym>a=</Sym>变量<Caret $s={3} $ml={2} /></SmallButton>
              <SmallButton><Sym $s={11}>f(x)</Sym>函数<Caret $s={3} $ml={2} /></SmallButton>
              <SmallButton $off><PiText />参数实例</SmallButton>
            </SmallColumn>
          </GroupBody>
          <GroupLabel>定义</GroupLabel>
        </Group>
        <Group $w={147}>
          <GroupBody $pl={7}>
            <Big w={57} a="全部构建" icon={<GridCube c="#dd6747" s={20} />} />
            <SmallColumn>
              <SmallButton $mt={-4}>
                <Svg><path d="M1 2.500h13V13H1zM1 5h13M4.500 5v8" stroke={GREY} /><path d="M8 9.500h7" stroke="#e2512b" strokeWidth="2" /><path d="M6 9.500l4.500-3.500v7z" fill="#e2512b" /></Svg>
                导入
              </SmallButton>
              <SmallButton $off>
                <Svg><path d="M6.500 4.500H2v7h3M9.500 11.500H14v-7h-3" stroke="#e2512b" strokeWidth="2.200" /><path d="M5 8.500l4 3-4 3zM11 1.500v6l-4-3z" fill="#e2512b" /></Svg>
                LiveLink<Caret $s={3} $ml={1} />
              </SmallButton>
            </SmallColumn>
          </GroupBody>
          <GroupLabel>几何</GroupLabel>
        </Group>
        <Group $w={68}>
          <GroupBody $pl={5}><Big w={60} a="添加材料" icon={<AddMaterial />} /></GroupBody>
          <GroupLabel>材料</GroupLabel>
        </Group>
        <Group $w={156}>
          <GroupBody $pl={7}>
            <Big w={76} a="Solid" b="Mechanics" caret icon={<SolidMech />} />
            <Big w={68} a="添加物理场" icon={<Atom />} />
          </GroupBody>
          <GroupLabel>物理场</GroupLabel>
        </Group>
        <Group $w={112}>
          <GroupBody $pl={7}>
            <Big w={56} a="构建网格" icon={<GridCube c={GREY} s={20} />} />
            <Big w={40} a="Mesh" b="1" caret icon={<MeshTri />} />
          </GroupBody>
          <GroupLabel>网格</GroupLabel>
        </Group>
        <Group $w={156}>
          <GroupBody $pl={12}>
            <Big w={36} a="计算" icon={<Svg s={18} vb={18}><path d="M0 4.500h18M0 13.500h18" stroke={TEAL} strokeWidth="4" /></Svg>} />
            <Big w={48} a="Study" b="2" caret icon={<Glasses s={31} />} />
            <Big w={55} a="添加研究" icon={<Glasses s={31} up={4}><DownArrow c={TEAL} /></Glasses>} />
          </GroupBody>
          <GroupLabel>研究</GroupLabel>
        </Group>
        <Group $w={169}>
          <GroupBody $pl={8}>
            <Big w={85} a="Displacement" b="(solid) 1" caret icon={<Cube c={PURPLE} s={27} />} />
            <Big w={70} a="添加绘图组" caret icon={<Stack s={29} />} />
          </GroupBody>
          <GroupLabel>结果</GroupLabel>
        </Group>
        <Group $w={112}>
          <GroupBody $pl={11}>
            <Big w={38} a="窗口" caret icon={<Windows />} />
            <Big w={60} a="重置桌面" caret icon={<ResetDesk />} />
          </GroupBody>
          <GroupLabel>布局</GroupLabel>
        </Group>
      </Ribbon>

      <Workspace>
        <ModelPanel>
          <PanelHead>
            <PanelTitle $s={21} $c="#3a5fa4">模型开发器</PanelTitle>
            <HeadTools $mr={0} $pt={3}><Caret $s={4} $c="#4a4a4a" /><Pin /></HeadTools>
          </PanelHead>
          <TreeTools>
            <ArrowIcon />
            <Tool $m={7} $w={15}><ArrowIcon r={180} c="#c4c5c8" /></Tool>
            <Tool $m={8} $w={15}><ArrowIcon r={90} /></Tool>
            <Tool $m={8} $w={15}><ArrowIcon r={-90} c="#c4c5c8" /></Tool>
            <Tool $m={9} $w={14}>
              <Svg s={14} vb={14}><path d="M0 1.500h2M3 1.500h11" stroke={BLUE} strokeWidth="1.800" /><path d="M2 8c2-4 8-4 10 0-2 4-8 4-10 0z" fill="#8fbfe2" stroke={BLUE} /><circle cx="7" cy="8" r="1.500" fill={BLUE} /></Svg>
            </Tool>
            <Tool $m={8} $w={17}><ListIcon up /></Tool>
            <Caret $s={3.5} $ml={6} />
            <Tool $m={12} $w={17}><ListIcon /></Tool>
            <Caret $s={3.5} $ml={6} />
            <Tool $m={13} $w={13}>
              <Svg s={14} vb={14}><path d="M1 2h7M1 4.500h7M1 7h7M1 9.500h7M1 12h7" stroke="#888" strokeWidth="1.300" /><path d="M9.500 2h3M9.500 4.500h3M9.500 7h3M9.500 9.500h3M9.500 12h3" stroke={BLUE} strokeWidth="1.300" /></Svg>
            </Tool>
            <Caret $s={3.5} $ml={8} />
          </TreeTools>
          <TreeBox>
            {tree.map(([d, st, icon, text, tag, sel], i) => (
              <Row key={i} $d={d} $sel={sel}>
                <Twist><TwistIcon state={st} /></Twist>
                <RowIcon>{icon}</RowIcon>
                <RowText><Mixed>{text}</Mixed>{tag && <em><Mixed>{"  " + tag}</Mixed></em>}</RowText>
              </Row>
            ))}
            <HScroll>
              <b><svg width="6" height="9"><path d="M5 .5l-4 4 4 4" stroke="#bbb" fill="none" /></svg></b>
              <i />
              <b><svg width="6" height="9"><path d="M1 .5l4 4-4 4" stroke="#bbb" fill="none" /></svg></b>
            </HScroll>
          </TreeBox>
          <Marker $x={74} $y={413} $w={155} $h={30} />
        </ModelPanel>

        <SettingsPanel>
          <SettingsHead>
            <PanelTitle $s={20} $c="#2193ec">设置</PanelTitle>
            <HeadTools $mr={4} $pt={3}><Caret $s={4} $c={BLUE} /><Pin c={BLUE} /></HeadTools>
          </SettingsHead>
          <SubTitle>三维镜像</SubTitle>
          <PlotLine>
            <Svg s={16}><path d="M.5 2h15v12H.5zM.5 4h15" stroke={GREY} /><path d="M9 6h5v6H9z" fill={PURPLE} /><circle cx="5.500" cy="9" r="3" fill="#fff" stroke={PURPLE} strokeWidth="1.200" /><path d="M3 9h5M6 7.500 8 9l-2 1.500" stroke={PURPLE} /></Svg>
            绘制
          </PlotLine>
          <Field $mt={11}>
            <Label $w={37}>标签:</Label>
            <TextBox $w={484}><Mixed>三维镜像 3</Mixed></TextBox>
            <SideButton>
              <Svg s={17}><path d="M2.500 5V1.500h12v12H7" stroke={GREY} /><path d="M2.500 3h12" stroke={GREY} strokeWidth="2" /><path d="M5 7h7M5 9.500h7" stroke="#23ad91" strokeWidth="1.300" /><path d="M5.500 10v4l-1.300-1.300L2 15.500 .7 14 3 12 1.500 10z" fill="#23ad91" /></Svg>
            </SideButton>
          </Field>
          <Section $mt={7}><Caret />数据</Section>
          <Field $mt={7}>
            <Label $w={49}>数据集:</Label>
            <Select><span><Mixed>三维镜像: Mirror 3D 1</Mixed></span><Caret $s={3.5} $c="#000" /></Select>
            <SideButton>
              <Svg s={17}><path d="M1.500 1.500h6M3 4h4M3 9h3M3 11.500h4M1.500 14.500h6" stroke={GREY} /><path d="M1.500 6.500h6" stroke={BLUE} strokeWidth="2" /><path d="M10.500 3v5M8.500 5.500h2M11 5.500h4.500v9H10" stroke={BLUE} strokeWidth="1.200" /></Svg>
            </SideButton>
          </Field>
          <Section $mt={9}><Caret />平面数据</Section>
          <Field $mt={6}>
            <Label $w={61}>平面类型:</Label>
            <Select>快速<Caret $s={3.5} $c="#000" /></Select>
          </Field>
          <Field>
            <Label $w={61}>平面:</Label>
            <Select $on><span><Mixed>xz 平面</Mixed></span><Caret $s={3.5} $c="#000" /></Select>
          </Field>
          <Field>
            <Label $w={61}>y 坐标:</Label>
            <TextBox $w={457}>0</TextBox>
            <Unit>mm</Unit>
          </Field>
          <Section $mt={8} $g={13}>
            <svg width="8" height="10" viewBox="0 0 8 10"><path d="M2 1 6.500 5 2 9z" fill="#fff" stroke="#a0a0a0" /></svg>高级
          </Section>
          <Marker $x={-4} $y={149} $w={573} $h={40} />
          <Marker $x={-5} $y={245} $w={571} $h={37} />
        </SettingsPanel>

        <RightColumn>
          <GraphicsPanel>
            <Tabs>
              <Tab $on $w={35}>图形</Tab>
              <Tab $w={79} $ml={9}>收敛图 1<CloseX /></Tab>
              <Tab $w={72} $ml={8}>绘图“1”<CloseX /></Tab>
              <TabTools><Caret $s={4} $c="#4a4a4a" /><Pin /></TabTools>
            </Tabs>
            <GfxTools>
              <Tool $m={5}><Magnify plus /></Tool>
              <Tool $m={5}><Magnify /></Tool>
              <Tool $m={5}><Magnify plus box /></Tool>
              <Caret $s={4} $ml={5} />
              <Tool $m={10}>
                <Svg><path d="M.7.7h14.600v14.600H.7z" stroke="#6d6e72" strokeWidth="1.200" /><path d="M5.500 8h5M8 5.500v5" stroke="#444" /><path d="M8 1.500 10 4H6zM8 14.500 10 12H6zM1.500 8 4 6v4zM14.500 8 12 6v4z" fill={BLUE} /></Svg>
              </Tool>
              <Sep $m={6} />
              <Tool $m={6}><Triad s={17} /></Tool>
              <Caret $s={4} $ml={5} />
              <Tool $m={10}><AxisTool t="xy" v="#4ca84a" h="#d91e5b" /></Tool>
              <Tool $m={5}><AxisTool t="yz" v={BLUE} h="#4ca84a" /></Tool>
              <Tool $m={5}><AxisTool t="xz" v={BLUE} h="#d91e5b" /></Tool>
              <Tool $m={5}><Svg><path d="M1 2h6v12H1z" fill={BLUE} /><path d="M7 6h2.500v4H7z" fill={BLUE} /><path d="M9.500 5.500 13 3v10l-3.500-2.500z" fill="#9cc8ea" stroke={BLUE} /><path d="M13 2h2v12h-2z" fill={BLUE} /></Svg></Tool>
              <Sep $m={6} />
              <Tool $m={6}><Svg><path d="M12 4a6 6 0 1 0 2 6" stroke={BLUE} strokeWidth="1.500" /><path d="M9 0l5.500 4L9 7z" fill={BLUE} /></Svg></Tool>
              <Caret $s={4} $ml={4} />
              <Sep $m={11} />
              <Tool $m={5}><Svg><path d="M1 3.500 6 1l8 2v9l-4 3-9-3zM1 3.500 10 6l4-3M10 6v9M6 1v9l8 2M6 10l-5 2M4 2v11M1 8l9 2 4-3" stroke="#777" strokeWidth=".9" /><path d="M7.500 0v12l5 4V4z" stroke={BLUE} /></Svg></Tool>
              <Caret $s={4} $ml={5} />
              <Sep $m={11} />
              <Toggle $m={6} $w={36}>
                <Svg s={14}><path d="M0 5.500h3L10 2v12L3 10.500H0z" fill={BLUE} /><path d="M12 4.500c2.500 1.500 2.500 5.500 0 7" stroke={BLUE} strokeWidth="1.500" /></Svg>
                <Caret $s={4} $c="#000" />
              </Toggle>
              <Tool $m={6}><Svg><path d="M4 5h10v9H4z" fill="#b9d3ea" /><path d="M1.500 2h10l3 2.500V14.500H4.500l-3-2.500zM1.500 2l3 2.800h10M4.500 4.800v9.700M11.500 2v9.500l3 3M1.500 12h10" stroke={BLUE} /></Svg></Tool>
              <Caret $s={4} $ml={4} />
              <Toggle $m={10}><Triad s={14} /></Toggle>
              <Toggle $m={5}><Svg s={14}><path d="M1.500 1.500h13v13h-13zM1.500 5.800h13M1.500 10.200h13M5.800 1.500v13M10.200 1.500v13" stroke="#1e78bd" strokeWidth="1.100" /></Svg></Toggle>
              <Tool $m={5}><Svg><circle cx="8" cy="8" r="5.200" stroke={BLUE} strokeWidth="4" /><path d="M8 0 4 7M15 4.500H7M15 12 11 5M8 16l4-7M1 11.500h8M1 4l4 7" stroke={BG} strokeWidth="1" /></Svg></Tool>
              <Caret $s={4} $ml={5} />
              <Tool $m={10}><Svg><path d="M0 4h4l1-2h6l1 2h4v10.500H0z" fill={BLUE} /><circle cx="8" cy="9" r="3.200" fill={BLUE} stroke="#fff" strokeWidth="1.200" /><path d="M2 5.500h1.500" stroke="#fff" /></Svg></Tool>
              <Tool $m={5}><Svg><path d="M4 .7h8v5H4zM4 10h8v5.500H4z" stroke={BLUE} strokeWidth="1.200" fill="#fff" /><path d="M1 5.700h14v6H12V9.500H4v2.200H1z" fill="#8fbfe2" stroke={BLUE} /></Svg></Tool>
            </GfxTools>
            <Canvas><Scene /></Canvas>
            <CornerLogo><MonitorLogo s={18} /></CornerLogo>
          </GraphicsPanel>

          <LogPanel>
            <LogTabs>
              <Tab $w={34}>进度</Tab>
              <Tab $on $w={36} $ml={8}>日志</Tab>
              <Tab $w={54} $ml={8}>表格<CloseX /></Tab>
              <TabTools><Caret $s={4} $c="#4a4a4a" /><Pin /></TabTools>
            </LogTabs>
            <LogTools>
              <Svg><path d="M3 7h10v8H3z" fill={BLUE} /><path d="M5 7V5a3 3 0 0 1 6 0v2" stroke={BLUE} strokeWidth="1.500" /></Svg>
              <Svg><path d="M3 0l4 6" stroke="#666" strokeWidth="1.500" /><path d="M4.500 7.500 8.500 5 13.500 13l-5 3z" fill="#f0a95a" /><path d="M7 9l3 5" stroke="#c97c2a" /></Svg>
              <Svg><path d="M14.500 5V2.500H1v11h13.500V12M1 5h13.500M4.500 5v8" stroke={GREY} /><path d="M7 8.500h5" stroke={BLUE} strokeWidth="1.800" /><path d="M16 8.500 12 5.500v6z" fill={BLUE} /></Svg>
            </LogTools>
            <LogBox>
              <LogText>{`4.4e-06, 9.5e-05, 0.00019
分离组残差估计
0.015, 2, 0.42
求解时间：13 s。
物理内存: 2.62 GB
虚拟内存: 3.31 GB
结束时间：2023年6月25日 下午3:12:59。`}</LogText>
              <VScroll>
                <svg width="9" height="6"><path d="M.5 5l4-4 4 4" stroke="#bbb" fill="none" /></svg>
                <i />
                <svg width="9" height="6"><path d="M.5 1l4 4 4-4" stroke="#bbb" fill="none" /></svg>
              </VScroll>
            </LogBox>
          </LogPanel>
        </RightColumn>
      </Workspace>
      <Status>2.23 GB | 2.83 GB</Status>
    </>
  );
}
